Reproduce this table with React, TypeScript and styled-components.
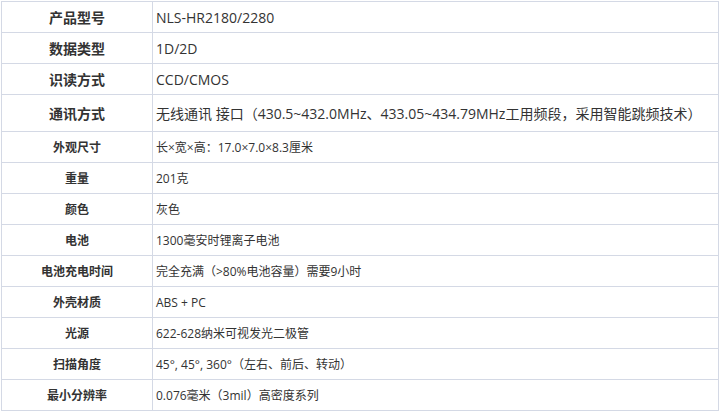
import React from 'react';
import styled, { createGlobalStyle } from 'styled-components';

const GlobalStyle = createGlobalStyle`
  html, body {
    margin: 0;
    padding: 0;
    background: #fff;
  }
  body {
    font-family: "Open Sans", "Noto Sans CJK SC", sans-serif;
    color: #333;
  }
`;

const SpecTable = styled.div`
  display: grid;
  grid-template-columns: 151px 566px;
  width: 718px;
  margin: 1px 0 0 1px;
  border-top: 1px solid #d4d9e5;
  border-left: 1px solid #d4d9e5;
  box-sizing: border-box;
`;

const Cell = styled.div<{ $h: number; $fs: number }>`
  box-sizing: border-box;
  height: ${({ $h }) => $h}px;
  display: flex;
  align-items: center;
  border-right: 1px solid #d4d9e5;
  border-bottom: 1px solid #d4d9e5;
  font-size: ${({ $fs }) => $fs}px;
  white-space: pre;
  text-spacing-trim: space-all;
`;

const Label = styled(Cell)`
  justify-content: center;
  font-weight: 700;
  color: #333;
`;

const Value = styled(Cell)`
  padding-left: 3px;
  color: #333;
`;

type Spec = { label: string; value: string; h?: number; fs?: number };

const specs: Spec[] = [
  { label: '产品型号', value: 'NLS-HR2180/2280', fs: 14 },
  { label: '数据类型', value: '1D/2D', fs: 14 },
  { label: '识读方式', value: 'CCD/CMOS', fs: 14 },
  {
    label: '通讯方式',
    value: '无线通讯 接口（430.5~432.0MHz、433.05~434.79MHz工用频段，采用智能跳频技术）',
    fs: 14,
    h: 37,
  },
  { label: '外观尺寸', value: '长×宽×高：17.0×7.0×8.3厘米' },
  { label: '重量', value: '201克' },
  { label: '颜色', value: '灰色' },
  { label: '电池', value: '1300毫安时锂离子电池' },
  { label: '电池充电时间', value: '完全充满（>80%电池容量）需要9小时' },
  { label: '外壳材质', value: 'ABS + PC' },
  { label: '光源', value: '622-628纳米可视发光二极管' },
  { label: '扫描角度', value: '45°, 45°, 360°（左右、前后、转动）' },
  { label: '最小分辨率', value: '0.076毫米（3mil）高密度系列' },
];

export default function App() {
  return (
    <>
      <GlobalStyle />
      <SpecTable>
        {specs.map((s) => {
          const h = s.h ?? 31;
          const fs = s.fs ?? 12;
          return (
            <React.Fragment key={s.label}>
              <Label $h={h} $fs={fs}>{s.label}</Label>
              <Value $h={h} $fs={fs}>{s.value}</Value>
            </React.Fragment>
          );
        })}
      </SpecTable>
    </>
  );
}
